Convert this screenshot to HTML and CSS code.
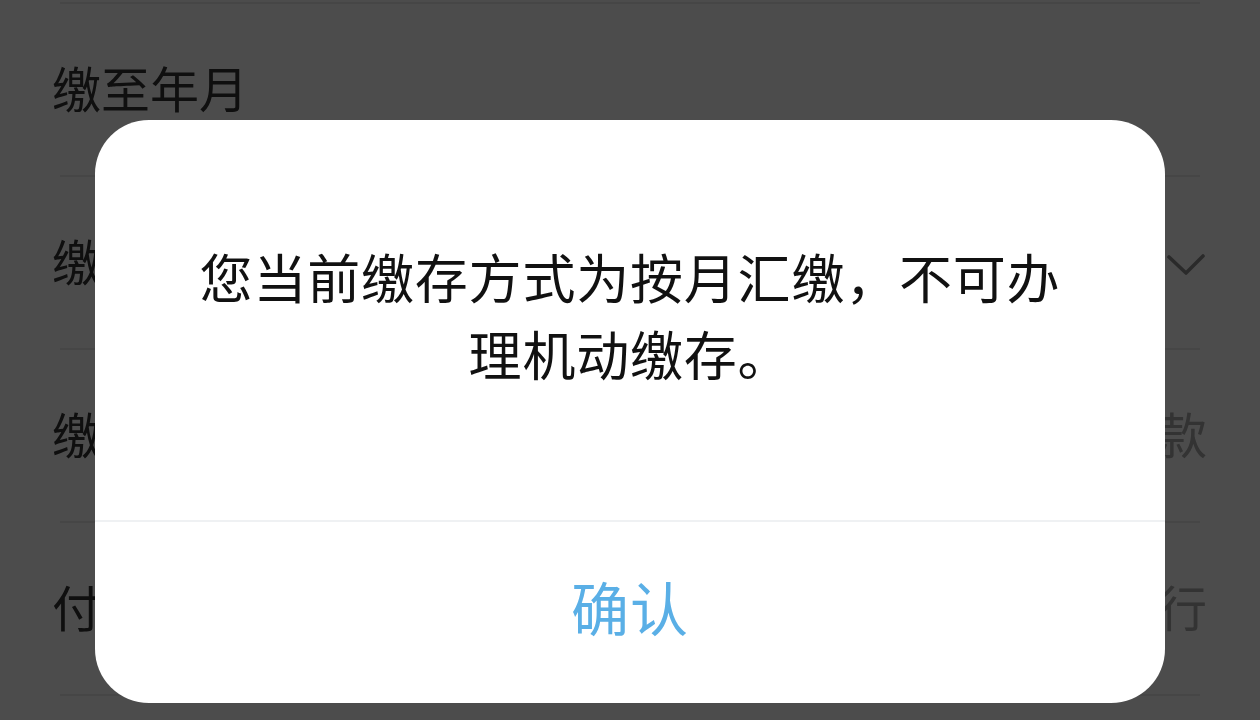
FILE: index.html
```html
<!DOCTYPE html>
<html lang="zh-CN">
<head>
<meta charset="utf-8">
<title>机动缴存</title>
<link rel="stylesheet" href="styles.css">
</head>
<body>
  <div class="form">
    <div class="row">
      <div class="row-inner">
        <span class="label">缴至年月</span>
      </div>
    </div>
    <div class="row">
      <div class="row-inner">
        <span class="label">缴存类型</span>
        <span class="value">
          <svg class="chevron" width="44" height="30" viewBox="0 0 44 30">
            <path d="M5 6 L22 22 L39 5" fill="none" stroke="#8e8e8e" stroke-width="3.6" stroke-linecap="round" stroke-linejoin="round"/>
          </svg>
        </span>
      </div>
    </div>
    <div class="row">
      <div class="row-inner">
        <span class="label">缴</span>
        <span class="value value-text">款</span>
      </div>
    </div>
    <div class="row last">
      <div class="row-inner">
        <span class="label">付</span>
        <span class="value value-text">行</span>
      </div>
    </div>
  </div>

  <div class="mask">
    <div class="dialog">
      <div class="dialog-body">
        <p class="dialog-msg">您当前缴存方式为按月汇缴，不可办理机动缴存。</p>
      </div>
      <div class="dialog-footer">
        <span class="dialog-btn">确认</span>
      </div>
    </div>
  </div>
</body>
</html>
```

FILE: styles.css
```css
* {
  box-sizing: border-box;
}

html, body {
  margin: 0;
  padding: 0;
  height: 100%;
  overflow: hidden;
}

body {
  background: #ffffff;
  font-family: "Noto Sans CJK SC", "Noto Sans", sans-serif;
}

.form {
  padding-top: 2px;
}

.row {
  margin: 0 60px;
  border-top: 2px solid #ececec;
}

.row.last {
  border-bottom: 2px solid #ececec;
}

.row-inner {
  margin: 0 -7px 0 -8px;
  height: 171px;
  display: flex;
  align-items: center;
  justify-content: space-between;
}

.label {
  font-size: 49px;
  line-height: 1;
  color: #333333;
  padding-bottom: 7px;
}

.value {
  display: flex;
  align-items: center;
}

.value-text {
  font-size: 49px;
  line-height: 1;
  color: #aaaaaa;
  padding-bottom: 7px;
}

.chevron {
  display: block;
  margin-right: -1px;
  margin-top: 6px;
}

.mask {
  position: fixed;
  inset: 0;
  background: rgba(0, 0, 0, 0.7);
  display: flex;
  justify-content: center;
  align-items: flex-start;
  padding-top: 120px;
}

.dialog {
  width: 1070px;
  height: 583px;
  background: #ffffff;
  border-radius: 54px;
  display: flex;
  flex-direction: column;
  overflow: hidden;
}

.dialog-body {
  height: 400px;
  display: flex;
  align-items: center;
  justify-content: center;
  padding: 0 100px 10px;
}

.dialog-msg {
  margin: 0;
  font-size: 53px;
  line-height: 77px;
  letter-spacing: 0.8px;
  color: #111111;
  text-align: center;
}

.dialog-footer {
  flex: 1;
  border-top: 2px solid #eff1f3;
  display: flex;
  align-items: center;
  justify-content: center;
}

.dialog-btn {
  font-size: 58px;
  line-height: 1;
  color: #5aafe6;
  letter-spacing: 1px;
  padding-bottom: 14px;
}
```
